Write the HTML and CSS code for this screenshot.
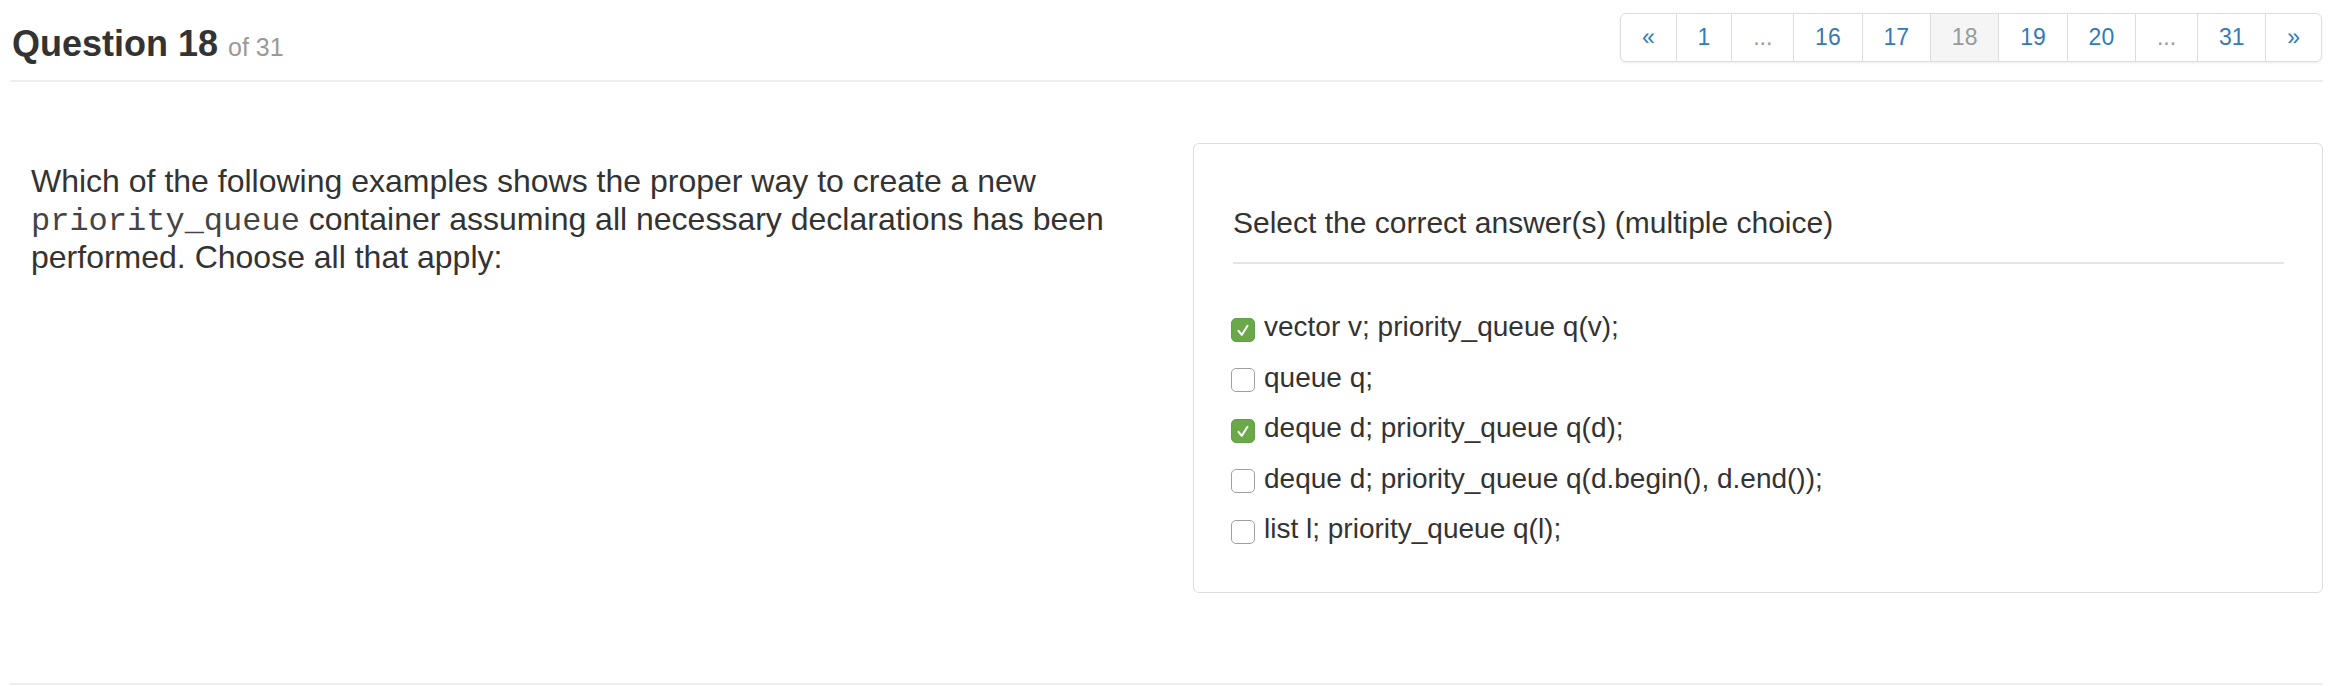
FILE: index.html
```html
<!DOCTYPE html>
<html>
<head>
<meta charset="utf-8">
<link rel="stylesheet" href="styles.css">
</head>
<body>
<div class="page">
  <div class="header">
    <h3 class="title">Question 18 <small class="of">of 31</small></h3>
    <ul class="pager">
      <li><a>&laquo;</a></li>
      <li><a>1</a></li>
      <li class="dots"><span>...</span></li>
      <li><a>16</a></li>
      <li><a>17</a></li>
      <li class="active"><span>18</span></li>
      <li><a>19</a></li>
      <li><a>20</a></li>
      <li class="dots"><span>...</span></li>
      <li><a>31</a></li>
      <li><a>&raquo;</a></li>
    </ul>
  </div>
  <div class="main">
    <div class="question">
      <p>Which of the following examples shows the proper way to create a new <code>priority_queue</code> container assuming all necessary declarations has been performed. Choose all that apply:</p>
    </div>
    <div class="panel">
      <div class="prompt">Select the correct answer(s) (multiple choice)</div>
      <div class="answers">
        <label class="answer"><span class="box checked"><svg viewBox="0 0 20 20" width="20" height="20"><polyline points="5.5,10.8 8.8,14.8 14.5,5.8" fill="none" stroke="#fff" stroke-width="2" stroke-linecap="round" stroke-linejoin="round"/></svg></span>vector v; priority_queue q(v);</label>
        <label class="answer"><span class="box"></span>queue q;</label>
        <label class="answer"><span class="box checked"><svg viewBox="0 0 20 20" width="20" height="20"><polyline points="5.5,10.8 8.8,14.8 14.5,5.8" fill="none" stroke="#fff" stroke-width="2" stroke-linecap="round" stroke-linejoin="round"/></svg></span>deque d; priority_queue q(d);</label>
        <label class="answer"><span class="box"></span>deque d; priority_queue q(d.begin(), d.end());</label>
        <label class="answer"><span class="box"></span>list l; priority_queue q(l);</label>
      </div>
    </div>
  </div>
  <div class="footer"></div>
</div>
</body>
</html>
```

FILE: styles.css
```css
* { box-sizing: border-box; }
html, body { margin: 0; padding: 0; background: #fff; }
body {
  font-family: "Liberation Sans", Arial, Helvetica, sans-serif;
  color: #333;
}
.page {
  margin-left: 10px;
  width: 2313px;
}
.header {
  display: flex;
  justify-content: space-between;
  align-items: flex-start;
  padding-top: 13px;
  height: 82px;
  border-bottom: 2px solid #eee;
}
.title {
  margin: 11px 0 0 2px;
  font-size: 36px;
  line-height: 40px;
  font-weight: bold;
  color: #333;
}
.of {
  font-size: 25px;
  font-weight: normal;
  color: #999;
}
.pager {
  display: flex;
  list-style: none;
  margin: 0 1px 0 0;
  padding: 0;
  border-radius: 6px;
  box-shadow: 0 1px 3px rgba(0,0,0,0.08);
}
.pager li a, .pager li span {
  display: block;
  height: 49px;
  line-height: 47px;
  padding: 0 20.9px;
  font-size: 23px;
  color: #337ab7;
  border: 1px solid #ddd;
  margin-left: -1px;
  background: #fff;
}
.pager li:first-child a { margin-left: 0; border-radius: 6px 0 0 6px; }
.pager li:last-child a { border-radius: 0 6px 6px 0; }
.pager li.dots span { color: #999; }
.pager li.active span { background: #f5f5f5; color: #999; }
.main {
  display: flex;
  align-items: flex-start;
  padding-top: 61px;
}
.question {
  width: 1183px;
  padding: 19px 18px 0 21px;
}
.question p {
  margin: 0;
  font-size: 32px;
  line-height: 38px;
}
.question code {
  font-family: "Liberation Mono", "Courier New", monospace;
  font-size: 32px;
  line-height: 1;
  color: #444;
}
.panel {
  flex: 1;
  border: 1px solid #ddd;
  border-radius: 6px;
  padding: 59px 38px 36px 39px;
  height: 450px;
}
.prompt {
  font-size: 30px;
  line-height: 40px;
  padding-bottom: 19px;
  border-bottom: 2px solid #e5e5e5;
}
.answers {
  padding-top: 38px;
}
.answer {
  display: flex;
  align-items: center;
  height: 50.5px;
  font-size: 28px;
  color: #333;
}
.box {
  width: 24px;
  height: 24px;
  margin: 5px 9px 0 -2px;
  border: 1.5px solid #a0a0a0;
  border-radius: 5px;
  background: #fff;
  display: flex;
  align-items: center;
  justify-content: center;
  flex: none;
}
.box.checked {
  background: #6aa84a;
  border-color: #62a043;
}
.box svg { display: block; }
.footer {
  margin-top: 90px;
  border-top: 2px solid #eee;
}
```
